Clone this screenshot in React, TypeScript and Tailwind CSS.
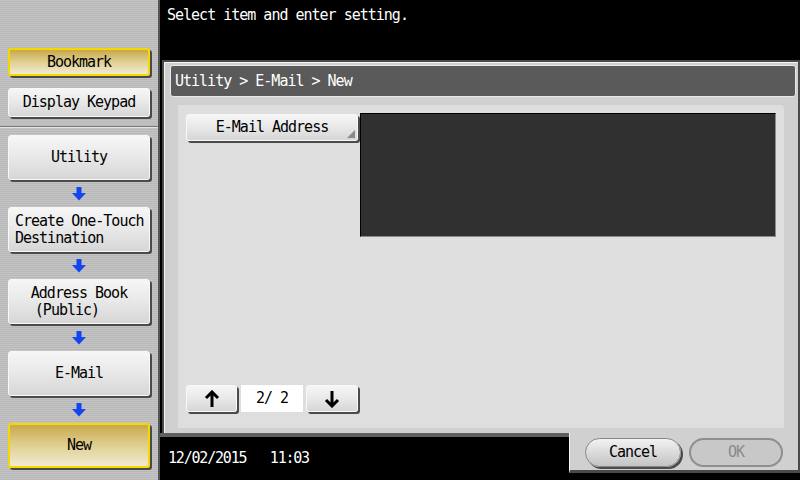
import React from 'react'

const font = { fontFamily: '"DejaVu Sans Mono", "Liberation Mono", monospace' }

const grayBtn =
  'flex items-center justify-center rounded-[3px] border border-[#f8f8f8] bg-gradient-to-b from-[#f6f6f6] via-[#e8e8e8] to-[#d6d6d6] shadow-[2px_2px_0_#4a4a4a] text-black'
const yellowBtn =
  'flex items-center justify-center rounded-[3px] border-2 border-[#f5d800] bg-gradient-to-b from-[#c8a84a] via-[#e0d090] to-[#f0ead2] shadow-[2px_2px_0_#4a4a4a] text-black'

function BlueArrow() {
  return (
    <div className="flex h-[27px] items-center justify-center">
      <svg width="14" height="14" viewBox="0 0 14 14">
        <polygon points="4.5,0 9.5,0 9.5,6 14,6 7,13.5 0,6 4.5,6" fill="#1446f0" />
      </svg>
    </div>
  )
}

function SideButton({ label, active }: { label: React.ReactNode; active?: boolean }) {
  return (
    <div className={`${active ? yellowBtn : grayBtn} h-[45px] w-[142px] text-center leading-[17px]`}>
      {label}
    </div>
  )
}

function PagerArrow({ up }: { up?: boolean }) {
  return (
    <svg width="16" height="18" viewBox="0 0 16 18">
      {up ? (
        <path d="M8 2v15M2 8l6-6 6 6" stroke="#000" strokeWidth="3" fill="none" />
      ) : (
        <path d="M8 1v15M2 10l6 6 6-6" stroke="#000" strokeWidth="3" fill="none" />
      )}
    </svg>
  )
}

export default function App() {
  return (
    <div
      className="flex h-[480px] w-[800px] overflow-hidden bg-black text-[15px] tracking-[-1px]"
      style={font}
    >
      {/* Left sidebar */}
      <div className="flex w-[160px] flex-col border-r-2 border-[#555] bg-[repeating-linear-gradient(180deg,#c4c4c4_0px,#c4c4c4_1px,#b8b8b8_1px,#b8b8b8_2px)]">
        <div className="flex flex-col gap-[12px] px-[8px] pt-[48px]">
          <div className={`${yellowBtn} h-[28px] w-[142px]`}>Bookmark</div>
          <div className={`${grayBtn} h-[29px] w-[142px]`}>Display Keypad</div>
        </div>
        <div className="mt-[9px] h-[2px] border-t border-[#7a7a7a] bg-[#e4e4e4]" />
        <div className="flex flex-col px-[8px] pt-[7px]">
          <SideButton label="Utility" />
          <BlueArrow />
          <SideButton label={<span className="block w-full pl-[6px] text-left">Create One-Touch<br />Destination</span>} />
          <BlueArrow />
          <SideButton label={<span>Address Book<br />(Public)&nbsp;&nbsp;&nbsp;</span>} />
          <BlueArrow />
          <SideButton label="E-Mail" />
          <BlueArrow />
          <SideButton label="New" active />
        </div>
      </div>

      {/* Right area */}
      <div className="flex flex-1 flex-col">
        <div className="h-[60px] pl-[7px] pt-[4px] text-white">Select item and enter setting.</div>

        <div className="ml-[2px] flex h-[373px] flex-col border-l-2 border-r-[3px] border-t-2 border-[#4a4a4a] bg-[#d0d0d0] shadow-[inset_1px_1px_0_#f4f4f4] pl-[6px] pr-[2px] pt-[3px]">
          <div className="flex h-[32px] items-center rounded-[3px] border border-[#e8e8e8] bg-[#5a5a5a] pl-[4px] text-white">
            Utility &gt; E-Mail &gt; New
          </div>
          <div className="ml-[8px] mr-[12px] mt-[8px] flex flex-1 flex-col justify-between rounded-tr-[4px] bg-[#dedede] px-[8px] pb-[16px] pt-[8px]">
            <div className="flex items-start">
              <div className={`${grayBtn} relative mt-[1px] h-[27px] w-[172px]`}>
                E-Mail Address
                <svg className="absolute bottom-[2px] right-[2px]" width="8" height="8" viewBox="0 0 8 8">
                  <polygon points="8,0 8,8 0,8" fill="#8a8a8a" />
                </svg>
              </div>
              <div className="ml-[2px] h-[124px] w-[416px] border-b border-l border-r border-t border-b-[#8a8a8a] border-l-black border-r-[#8a8a8a] border-t-black bg-[#303030]" />
            </div>
            <div className="flex items-center">
              <div className={`${grayBtn} h-[27px] w-[51px]`}>
                <PagerArrow up />
              </div>
              <div className="ml-[4px] flex h-[27px] w-[62px] items-center justify-center bg-white text-black">
                <span className="whitespace-pre">2/ 2</span>
              </div>
              <div className={`${grayBtn} ml-[3px] h-[27px] w-[52px]`}>
                <PagerArrow />
              </div>
            </div>
          </div>
          <div className="h-[5px]" />
        </div>

        <div className="flex flex-1">
          <div className="flex-1 border-t-[4px] border-[#606060] pl-[8px] pt-[10px] text-white tracking-[-1.2px]">
            <span className="whitespace-pre">12/02/2015   11:03</span>
          </div>
          <div className="flex h-[40px] w-[232px] items-start gap-[8px] border-b-[3px] border-l border-r-[3px] border-[#4a4a4a] border-l-[#f4f4f4] bg-[#d0d0d0] pl-[15px] pt-[5px]">
            <div className="flex h-[29px] w-[96px] items-center justify-center rounded-full border border-[#888] bg-gradient-to-b from-[#f2f2f2] to-[#c4c4c4] shadow-[2px_2px_0_#4a4a4a] text-black">
              Cancel
            </div>
            <div className="flex h-[29px] w-[94px] items-center justify-center rounded-full border-2 border-[#8e8e8e] bg-[#c8c8c8] text-[#8a8a8a]">
              OK
            </div>
          </div>
        </div>
      </div>
    </div>
  )
}
